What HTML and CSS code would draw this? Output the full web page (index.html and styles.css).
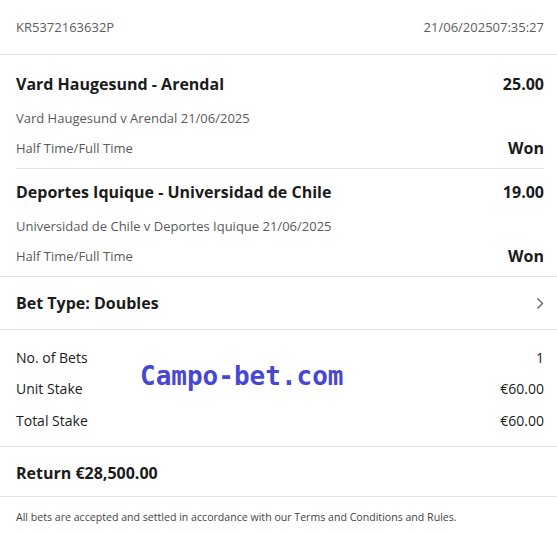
FILE: index.html
```html
<!DOCTYPE html>
<html lang="en">
<head>
    <meta charset="UTF-8">
    <meta name="viewport" content="width=device-width, initial-scale=1.0">
    <title>Bet Receipt</title>
    <link rel="stylesheet" href="styles.css">
</head>
<body>
    <div class="receipt">
        <div class="header">
            <span>KR5372163632P</span>
            <span>21/06/202507:35:27</span>
        </div>

        <div class="selections">
            <div class="selection">
                <div class="row title-row">
                    <span>Vard Haugesund - Arendal</span>
                    <span>25.00</span>
                </div>
                <div class="row sub-row">
                    <span>Vard Haugesund v Arendal 21/06/2025</span>
                </div>
                <div class="row market-row">
                    <span>Half Time/Full Time</span>
                    <span class="result">Won</span>
                </div>
            </div>
            <div class="selection">
                <div class="row title-row">
                    <span>Deportes Iquique - Universidad de Chile</span>
                    <span>19.00</span>
                </div>
                <div class="row sub-row">
                    <span>Universidad de Chile v Deportes Iquique 21/06/2025</span>
                </div>
                <div class="row market-row">
                    <span>Half Time/Full Time</span>
                    <span class="result">Won</span>
                </div>
            </div>
        </div>

        <div class="bet-type">
            <span>Bet Type: Doubles</span>
            <svg class="chevron" width="8" height="13" viewBox="0 0 8 13">
                <path d="M1.5 1.5 L6.5 6.5 L1.5 11.5" fill="none" stroke="#555" stroke-width="1.2"/>
            </svg>
        </div>

        <div class="summary">
            <div class="row sum-row">
                <span>No. of Bets</span>
                <span>1</span>
            </div>
            <div class="row sum-row">
                <span>Unit Stake</span>
                <span>€60.00</span>
            </div>
            <div class="row sum-row">
                <span>Total Stake</span>
                <span>€60.00</span>
            </div>
            <div class="watermark">Campo-bet.com</div>
        </div>

        <div class="return">Return €28,500.00</div>

        <div class="footer">
            All bets are accepted and settled in accordance with our Terms and Conditions and Rules.
        </div>
    </div>
</body>
</html>
```

FILE: styles.css
```css
body {
    margin: 0;
    background: #fff;
    font-family: "Open Sans", "Noto Sans", Arial, sans-serif;
    color: #1b1b1b;
}
.receipt {
    width: 557px;
}
.row {
    display: flex;
    justify-content: space-between;
    align-items: center;
}
.header {
    height: 54px;
    display: flex;
    justify-content: space-between;
    align-items: center;
    padding: 0 13px 0 16px;
    font-size: 13px;
    color: #5c5c5c;
    border-bottom: 1px solid #e3e3e3;
}
.selections {
    padding-top: 6px;
    border-bottom: 1px solid #e3e3e3;
}
.selection {
    margin: 0 13px 0 16px;
    padding: 11px 0 8px;
}
.selection + .selection {
    border-top: 1px solid #e3e3e3;
}
.title-row {
    height: 24px;
    font-size: 16px;
    font-weight: 700;
}
.sub-row {
    height: 20px;
    margin-top: 12px;
    font-size: 13px;
    color: #5a5a5a;
}
.market-row {
    height: 24px;
    margin-top: 8px;
    font-size: 13px;
    color: #5a5a5a;
}
.result {
    font-size: 16px;
    font-weight: 700;
    color: #1b1b1b;
}
.bet-type {
    display: flex;
    justify-content: space-between;
    align-items: center;
    height: 24px;
    padding: 14px 13px 14px 16px;
    font-size: 16px;
    font-weight: 700;
    border-bottom: 1px solid #e3e3e3;
}
.summary {
    position: relative;
    padding: 17px 13px 16px 16px;
    display: flex;
    flex-direction: column;
    gap: 11.5px;
    border-bottom: 1px solid #e3e3e3;
}
.sum-row {
    height: 20px;
    font-size: 14px;
}
.watermark {
    position: absolute;
    left: 140px;
    top: 31px;
    font-family: "DejaVu Sans Mono", monospace;
    font-weight: 700;
    font-size: 26px;
    color: #4747d4;
}
.return {
    height: 24px;
    line-height: 24px;
    padding: 14px 16px 11px;
    font-size: 16px;
    font-weight: 700;
    border-bottom: 1px solid #e3e3e3;
}
.footer {
    padding: 12px 16px 0;
    font-size: 10.6px;
    line-height: 16px;
    color: #444;
}
```
